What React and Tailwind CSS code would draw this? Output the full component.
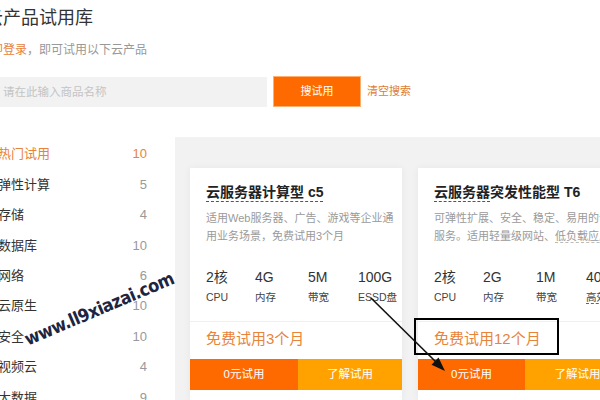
import React from "react";

const font = { fontFamily: '"Liberation Sans","Noto Sans CJK SC",sans-serif' };

const cats = [
  ["热门试用", 10, true],
  ["弹性计算", 5],
  ["存储", 4],
  ["数据库", 10],
  ["网络", 6],
  ["云原生", 10],
  ["安全", 10],
  ["视频云", 4],
  ["大数据", 9],
];

function Card({ title, desc, specs, promo, btnW }) {
  return (
    <div className="w-[212px] shrink-0 bg-white flex flex-col shadow-[0_0_8px_rgba(0,0,0,0.05)]">
      <div className="px-4 pt-4">
        <div className="text-[14px] leading-[16px] font-bold text-[#222] whitespace-nowrap">{title}</div>
        <div className="mt-[9px] text-[11px] leading-[18px] text-[#9a9a9a] whitespace-nowrap">
          {desc}
        </div>
        <div className="mt-[23px] grid grid-cols-[49px_53px_50px_50px] whitespace-nowrap">
          {specs.map(([v, l], i) => (
            <div key={i} className="flex flex-col">
              <span className="text-[14px] leading-[18px] text-[#333]">{v}</span>
              <span className="mt-[4px] text-[10.5px] leading-[14px] text-[#444]">{l}</span>
            </div>
          ))}
        </div>
      </div>
      <div className="mt-[17px] border-t border-[#efefef] px-4 pt-[7px]">
        <div className="text-[15px] leading-[20px] text-[#e8833a] whitespace-nowrap">{promo}</div>
      </div>
      <div className="mt-[10px] flex h-[31px] text-white text-[11.5px]">
        <div className={`${btnW} bg-[#ff6a00] flex items-center justify-center`}>0元试用</div>
        <div className="flex-1 bg-[#ffa200] flex items-center justify-center">了解试用</div>
      </div>
    </div>
  );
}

export default function App() {
  return (
    <div className="relative w-[600px] h-[400px] overflow-hidden bg-white" style={font}>
      <div className="h-[137px] pt-[6px]">
        <h1 className="ml-[-15px] text-[18px] leading-[24px] text-[#333] whitespace-nowrap">云产品试用库</h1>
        <p className="ml-[-21px] mt-[11px] text-[12px] leading-[18px] text-[#999] whitespace-nowrap">
          <span className="text-[#e8833a]">立即登录</span>，即可试用以下云产品
        </p>
        <div className="mt-[17px] flex items-center">
          <input
            className="w-[267px] h-[30px] bg-[#f2f2f2] pl-[3px] text-[11.5px] outline-none placeholder:text-[#c4c4c4]"
            placeholder="请在此输入商品名称"
          />
          <button className="ml-[6px] w-[88px] h-[31px] bg-[#ff6a00] border border-[#ffb070] text-white text-[11px]">搜试用</button>
          <span className="ml-[6px] text-[11px] text-[#e07b2f]">清空搜索</span>
        </div>
      </div>
      <div className="flex h-[263px] bg-[#f2f2f2]">
        <div className="w-[175px] shrink-0 bg-white pt-[2px] flex flex-col overflow-hidden">
          {cats.map(([n, c, a]) => (
            <div key={n} className="h-[30.4px] shrink-0 flex items-center justify-between pr-[28px]">
              <span className={`ml-[-2px] text-[13px] ${a ? "text-[#e8833a]" : "text-[#333]"}`}>{n}</span>
              <span className={`text-[13px] ${a ? "text-[#e8833a]" : "text-[#999]"}`}>{c}</span>
            </div>
          ))}
        </div>
        <div className="pl-[15px] pt-[31px] flex gap-[16px]">
          <Card
            title={<span className="border-b border-dashed border-[#555] pb-[1px]">云服务器计算型 c5</span>}
            desc={<>适用Web服务器、广告、游戏等企业通<br />用业务场景，免费试用3个月</>}
            specs={[["2核", "CPU"], ["4G", "内存"], ["5M", "带宽"], ["100G", "ESSD盘"]]}
            promo="免费试用3个月"
            btnW="w-[108px]"
          />
          <Card
            title={<><span className="border-b border-dashed border-[#555] pb-[1px]">云服务器</span>突发性能型 T6</>}
            desc={<>可弹性扩展、安全、稳定、易用的计算<br />服务。适用轻量级网站、<span className="border-b border-dashed border-[#bbb]">低负载应用</span></>}
            specs={[["2核", "CPU"], ["2G", "内存"], ["1M", "带宽"], ["40G", <span className="border-b border-dashed border-[#666]">高效云盘</span>]]}
            promo="免费试用12个月"
            btnW="w-[107px]"
          />
        </div>
      </div>

      <div
        className="absolute left-[9px] top-[295px] w-[180px] text-center text-[18px] font-bold text-[#1d2540] whitespace-nowrap rotate-[-23deg] tracking-[-0.5px]"
        style={{ fontFamily: '"DejaVu Sans",sans-serif', fontStretch: "condensed" }}
      >
        www.ll9xiazai.com
      </div>

      <div className="absolute left-[414px] top-[318px] w-[145px] h-[37px] border-2 border-black" />

      <svg className="absolute left-0 top-0 pointer-events-none" width="600" height="400">
        <line x1="371" y1="298" x2="436" y2="362" stroke="#111" strokeWidth="1.6" />
        <polygon points="445,371 431.5,364.8 438.5,357.6" fill="#111" />
      </svg>
    </div>
  );
}
